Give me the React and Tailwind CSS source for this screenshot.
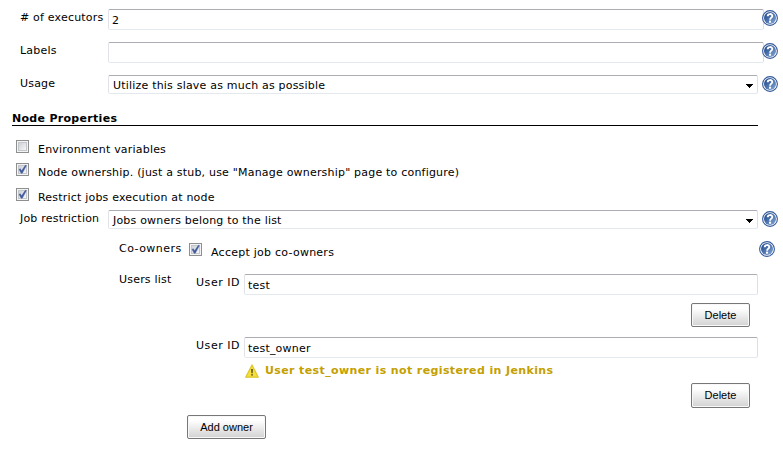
import React from "react";

function Help({ className = "" }) {
  return (
    <svg viewBox="0 0 16 16" className={`h-4 w-4 shrink-0 ${className}`}>
      <defs>
        <linearGradient id="help-fill" x1="0" y1="0" x2="1" y2="1">
          <stop offset="0.2" stopColor="#2c5595" />
          <stop offset="1" stopColor="#86a9d6" />
        </linearGradient>
      </defs>
      <circle cx="8" cy="8" r="7.4" fill="#fff" stroke="#34599a" strokeWidth="1.1" />
      <circle cx="8" cy="8" r="6" fill="url(#help-fill)" />
      <path d="M5.7 6.2C5.7 3.4 10.3 3.4 10.3 6C10.3 7.7 8.1 7.6 8.1 9.7" fill="none" stroke="#fff" strokeWidth="1.9" />
      <rect x="7" y="10.6" width="2.1" height="2.1" fill="#fff" />
    </svg>
  );
}

function Label({ className = "", children }) {
  return <div className={`shrink-0 whitespace-pre leading-[14px] ${className}`}>{children}</div>;
}

function Check({ on, className = "" }) {
  return (
    <div className={`h-[13px] w-[13px] shrink-0 border border-[#8e8f8f] bg-[#f4f4f4] p-px ${className}`}>
      <div className="h-[9px] w-[9px] border border-[#c3c7cc] bg-linear-to-br from-[#cdd1d6] to-[#f6f6f6]">
        {on && (
          <svg viewBox="0 0 9 9" className="-ml-px -mt-px h-[9px] w-[9px] overflow-visible">
            <path d="M1 4.3L2.4 3.8L3.6 5.8L7.3 0.3L8.4 0.5L4.3 8.2L3.1 8.2Z" fill="#40589c" stroke="#40589c" strokeWidth="0.4" />
          </svg>
        )}
      </div>
    </div>
  );
}

const box =
  "shrink-0 rounded-[2px] border border-t-[#abadb3] border-r-[#dbdfe6] border-b-[#e3e9ef] border-l-[#e2e3ea] bg-white";

function Field({ className = "", children }) {
  return <div className={`${box} h-[21px] pl-[3px] pt-[4px] leading-[14px] ${className}`}>{children}</div>;
}

function Select({ className = "", children }) {
  return (
    <div className={`${box} flex h-[19px] w-[650px] justify-between pl-1 pr-[4px] pt-[3px] leading-[14px] ${className}`}>
      <span>{children}</span>
      <svg viewBox="0 0 7 4" shapeRendering="crispEdges" className="mt-[5px] h-[4px] w-[7px]">
        <path d="M0 0H7V1H6V2H5V3H4V4H3V3H2V2H1V1H0Z" fill="#000" />
      </svg>
    </div>
  );
}

function Button({ className = "", children }) {
  return (
    <button
      className={`shrink-0 rounded-[2px] border border-[#777] bg-linear-to-b from-white from-20% to-[#d2d2d2] pb-px font-['Liberation_Sans',Arial,sans-serif] text-[11px] leading-[14px] tracking-normal shadow-[inset_0_0_0_1px_#f8f8f8] ${className}`}
    >
      {children}
    </button>
  );
}

export default function App() {
  return (
    <div className="h-[452px] w-[783px] overflow-hidden bg-white pt-[9px] font-['DejaVu_Sans',Verdana,sans-serif] text-[11px] tracking-[0.2px] text-black">
      <div className="flex h-[33px]">
        <Label className="ml-5 mt-[2px] w-[88px]"># of executors</Label>
        <Field className="w-[656px]">2</Field>
        <Help className="-ml-0.5 mt-px" />
      </div>
      <div className="flex h-[33px]">
        <Label className="ml-5 mt-[2px] w-[88px]">Labels</Label>
        <Field className="w-[656px]" />
        <Help className="-ml-0.5 mt-px" />
      </div>
      <div className="flex h-9">
        <Label className="ml-5 mt-[2px] w-[88px]">Usage</Label>
        <Select>Utilize this slave as much as possible</Select>
        <Help className="ml-1 mt-px" />
      </div>
      <div className="ml-3 h-[15px] w-[746px] border-b border-black font-bold leading-[16px] tracking-[0.3px]">Node Properties</div>
      <div className="mt-[14px] flex h-[23px]">
        <Check className="ml-4" />
        <Label className="ml-[9px] mt-[3px]">Environment variables</Label>
      </div>
      <div className="flex h-[25px]">
        <Check on className="ml-4" />
        <Label className="ml-[9px] mt-[3px]">Node ownership. (just a stub, use "Manage ownership" page to configure)</Label>
      </div>
      <div className="flex h-[22px]">
        <Check on className="ml-4" />
        <Label className="ml-[9px] mt-[3px]">Restrict jobs execution at node</Label>
      </div>
      <div className="flex h-[31px]">
        <Label className="ml-5 mt-[2px] w-[88px]">Job restriction</Label>
        <Select>Jobs owners belong to the list</Select>
        <Help className="ml-1 mt-px" />
      </div>
      <div className="flex h-[33px]">
        <Label className="ml-[119px] mt-px w-[70px] tracking-[0.45px]">Co-owners</Label>
        <Check on className="mt-[2px]" />
        <Label className="ml-[9px] mt-[5px] w-[548px] tracking-[0.25px]">Accept job co-owners</Label>
        <Help />
      </div>
      <div className="flex">
        <Label className="ml-[119px] mt-[-1px] w-[68px]">Users list</Label>
        <div className="w-[571px]">
          <div className="flex h-[29px]">
            <Label className="ml-[9px] mt-[2px] w-12 tracking-[0.55px]">User ID</Label>
            <Field className="w-[514px]">test</Field>
          </div>
          <div className="flex h-[34px] justify-end pr-2">
            <Button className="h-6 w-[59px]">Delete</Button>
          </div>
          <div className="flex h-[27px]">
            <Label className="ml-[9px] mt-[2px] w-12 tracking-[0.55px]">User ID</Label>
            <Field className="w-[514px]">test_owner</Field>
          </div>
          <div className="flex h-[19px] pl-[58px] font-bold text-[#c4a000]">
            <svg viewBox="0 0 14 14" className="h-[14px] w-[14px] shrink-0">
              <path d="M7 1L13.3 13.2H0.7Z" fill="#f5df3c" stroke="#dec52c" strokeWidth="1.2" strokeLinejoin="round" />
              <path d="M6.1 5H7.9L7.6 9.3H6.4Z" fill="#54501f" />
              <rect x="6.3" y="10.1" width="1.5" height="1.5" fill="#54501f" />
            </svg>
            <Label className="ml-[6px] tracking-[0.38px]">User test_owner is not registered in Jenkins</Label>
          </div>
          <div className="flex h-8 justify-end pr-2">
            <Button className="h-[25px] w-[59px]">Delete</Button>
          </div>
          <Button className="h-6 w-[79px]">Add owner</Button>
        </div>
      </div>
    </div>
  );
}
